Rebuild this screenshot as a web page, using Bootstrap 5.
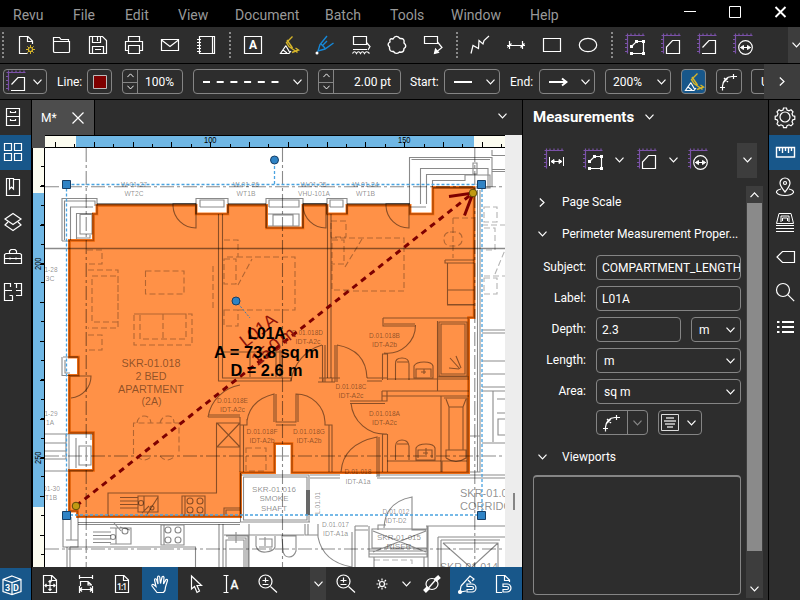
<!DOCTYPE html>
<html lang="en">
<head>
<meta charset="utf-8">
<meta name="viewport" content="width=device-width, initial-scale=1">
<title>Revu</title>
<link href="https://cdn.jsdelivr.net/npm/bootstrap@5.3.0/dist/css/bootstrap.min.css" rel="stylesheet">
<style>
body{width:800px;height:600px;background:#000;color:#fff;font:12px/16px Roboto,"Liberation Sans",sans-serif;overflow:hidden}
svg{display:block;flex:none}
.ic{width:24px;height:24px;fill:none;stroke:#fff;stroke-width:1.2;margin:0 6px}
.chev{width:9px;height:6px;fill:none;stroke:#fff;stroke-width:1.2}
.menubar{height:27px;font-size:14px;line-height:16px;color:#999;padding:4px 0 0 13px}
.menubar span{flex:none;white-space:nowrap;padding-top:3px}
.surface{background:#2d2d2d}
.toolrow{height:36px;margin-bottom:1px}
.grip{width:11px;height:26px;flex:none;background:repeating-linear-gradient(#8a8a8a 0 2px,transparent 2px 4px) 3px 0/2px 100% no-repeat}
.grip-first{width:8px;background-position-x:2px}
.proprow{height:35px;margin-bottom:1px;padding-left:3px}
.ctl{height:25px;border:1px solid #858585;border-radius:4px;flex:none;overflow:hidden;white-space:nowrap}
.spin{width:15px;border-right:1px solid #858585;flex:none}
.spin>span{height:50%;display:flex;align-items:center;justify-content:center}
.spin>span+span{border-top:1px solid #858585}
.spin .chev{width:7px;height:5px}
.blue{background:#18578a}
.raised{background:#3d3d3d}
.rail{width:31px;flex:none}
.rail>span{height:35px;padding-top:5px}
.rail .ic{margin:0 0 0 1px}
.rail-r .ic{margin-left:4px}
.tabstrip{height:35px}
.doctab{width:62px;background:#4d4d4d;border-right:0}
.bottombar{height:33px}
.bottombar>span{height:33px;display:flex;align-items:center;justify-content:center}
.panel{width:245px;flex:none}
.frm{row-gap:6px}
.frm label{width:63px;text-align:right;margin-right:10px;flex:none;line-height:25px}
.sect{height:32px}
.sbar{width:17px;background:#3d3d3d;flex:none}
.thumb{width:15px;height:348px;background:#8a8a8a}
</style>
<script src="https://cdn.jsdelivr.net/npm/bootstrap@5.3.0/dist/js/bootstrap.bundle.min.js"></script>
</head>
<body class="d-flex flex-column">
<svg width="0" height="0" class="position-absolute">
<defs>
<symbol id="dn" viewBox="0 0 9 6"><path d="M.5.7 4.5 4.9 8.5.7"/></symbol>
<symbol id="up" viewBox="0 0 9 6"><path d="M.5 5.1 4.5.9 8.5 5.1"/></symbol>
<symbol id="rt" viewBox="0 0 6 9"><path d="M.8.5 5 4.5.8 8.5"/></symbol>
<symbol id="mruler" viewBox="0 0 24 24"><path d="M2.500 2.500H21.500M4.500.5V20.500" stroke="#7b52a8"/><path d="M8 .5v2M12 .5v2M16 .5v2M20 .5v2M2 6.500h2M2 10.500h2M2 14.500h2M2 18.500h2" stroke="#7b52a8"/></symbol>
<symbol id="new" viewBox="0 0 24 24"><path d="M13.500 20.500H5.500V3.500H14L18.500 8V11M13.500 3.500V8.500H18.500"/><path d="M16.500 12v9M12 16.500h9M13.300 13.300l6.400 6.400M19.700 13.300l-6.400 6.400" stroke="#d6b52a" stroke-width="1"/><circle cx="16.500" cy="16.500" r="2" fill="#2d2d2d" stroke="#d6b52a"/></symbol>
<symbol id="open" viewBox="0 0 24 24"><path d="M3.500 18.500V4.500H9.500L11 6.500H18.500V8.500M3.500 18.500Q3.500 19.500 5 19.500H18.500Q19.500 19.500 19.500 18.500V8.500H3.500"/></symbol>
<symbol id="save" viewBox="0 0 24 24"><path d="M3.500 3.500H16.500L20.500 7.500V20.500H3.500ZM6.500 3.500V9.500H14.500V3.500M11.500 4V8M6.500 20V13.500H17.500V20M9 16.500h6"/></symbol>
<symbol id="print" viewBox="0 0 24 24"><path d="M6.500 8.500V3.500H17.500V8.500M6.500 17.500H3.500V8.500H20.500V17.500H17.500M6.500 12.500H17.500V20.500H6.500Z"/></symbol>
<symbol id="mail" viewBox="0 0 24 24"><path d="M3.500 6.500H20.500V17.500H3.500ZM3.500 7 12 13.500 20.500 7"/></symbol>
<symbol id="book" viewBox="0 0 24 24"><path d="M5.500 3.500H20.500V20.500H5.500ZM18.500 4V20M3 6.500h4M3 9.500h4M3 12.500h4M3 15.500h4M3 18.500h4"/></symbol>
<symbol id="atext" viewBox="0 0 24 24"><path d="M3.500 3.500H20.500V20.500H3.500Z"/><text x="8" y="16" font-size="12" font-weight="700" fill="#fff" stroke="none">A</text></symbol>
<symbol id="hilite" viewBox="0 0 24 24"><path d="M15.500 3.500 9.500 9.500l2.500 4 8.500 6M10 7l5.500 8M15 19.500l6.500-2.500-3-2" stroke="#d6b52a" stroke-width="1.400"/><path d="M9 12.500 3.500 20.500H12L14 18M9 13l3.500 6M6 17l4 3"/></symbol>
<symbol id="pen" viewBox="0 0 24 24"><path d="M14 3 7 11.500 5 18l7-2 8.500-6M8 11l4 4M10 12l4-4" stroke="#1688d8" stroke-width="1.400"/><circle cx="4" cy="20" r="1.500" fill="#fff" stroke="none"/></symbol>
<symbol id="wavebox" viewBox="0 0 24 24"><path d="M4.500 3.500H17.500V11.500H4.500ZM17.500 9.500l3.500 4-2 3.500M4 16.500h14M3.500 20.500q2-3.500 4 0 2-3.500 4 0 2-3.500 4 0 2-3.500 5 0"/></symbol>
<symbol id="cloud" viewBox="0 0 24 24"><path d="M8 6Q11 1 15 5.500 20 5 19 10 22.500 13 19 15.500 19 20 14.500 19 11 22 8.500 18.500 4 19 4.500 14 1.500 11 5 9 4 5 8 6Z" stroke-width="1.400"/></symbol>
<symbol id="callout" viewBox="0 0 24 24"><path d="M3.500 3.500H16.500V10.500H3.500ZM16.500 9l4.500 5.500-5 4"/><path d="m13.500 20.500 1-4.500 3 3.500Z" fill="#fff"/></symbol>
<symbol id="poly" viewBox="0 0 24 24"><path d="m3 20.500 2-8 5.500 3 .5-8 4 3.500 1-3.500 5-4.500"/></symbol>
<symbol id="dim" viewBox="0 0 24 24"><path d="M5.500 8v8M18.500 8v8M3 12.500h18M3.500 14.500l4-4M16.500 14.500l4-4"/></symbol>
<symbol id="rect" viewBox="0 0 24 24"><path d="M3.500 5.500H20.500V18.500H3.500Z"/></symbol>
<symbol id="oval" viewBox="0 0 24 24"><ellipse cx="12" cy="12" rx="8.700" ry="6.700"/></symbol>
<symbol id="mpoly" viewBox="0 0 24 24"><use href="#mruler"/><path d="M8.500 13.500 13.500 8.500H20.500V20.500H8.500"/><path d="M7 12h3v3H7ZM12 7h3v3h-3ZM19 7h3v3h-3ZM19 19h3v3h-3ZM7 19h3v3H7Z" fill="#fff" stroke="none"/></symbol>
<symbol id="marea" viewBox="0 0 24 24"><use href="#mruler"/><path d="M7.500 20.500V14L13.500 7.500H20.500V20.500Z"/></symbol>
<symbol id="mper" viewBox="0 0 24 24"><use href="#mruler"/><path d="M7.500 14.500 14 7.500H20.500V20.500H7"/></symbol>
<symbol id="mdia" viewBox="0 0 24 24"><use href="#mruler"/><circle cx="14.500" cy="14.500" r="6.800"/><path d="M9.500 14.500h10M12.500 12.500l-3 2 3 2ZM16.500 12.500l3 2-3 2Z" fill="#fff" stroke-width="1"/></symbol>
<symbol id="mlen" viewBox="0 0 24 24"><use href="#mruler"/><path d="M7.500 9v9M21.500 9v9M9 13.500h11M12 11.500l-3 2 3 2ZM17 11.500l3 2-3 2Z" fill="#fff" stroke-width="1"/></symbol>
<symbol id="curve" viewBox="0 0 24 24"><path d="M5.500 20.500V16Q6.500 7 15 6.500H20M3 17.500h5M16.500 4v5M7 8l4 4M11 8l-4 4"/></symbol>
<symbol id="cabinet" viewBox="0 0 24 24"><path d="M5.500 3.500H18.500V20.500H5.500ZM5.500 11.500H18.500M9.500 6v1.500h5V6M9.500 14v1.500h5V14"/></symbol>
<symbol id="grid4" viewBox="0 0 24 24"><path d="M3.500 3.500h7v7h-7ZM13.500 3.500h7v7h-7ZM3.500 13.500h7v7h-7ZM13.500 13.500h7v7h-7Z"/></symbol>
<symbol id="bmark" viewBox="0 0 24 24"><path d="M8 3.500H5.500V20.500H18.500V4.500H12.500M8.500 3.500h4V14l-2-2-2 2Z"/></symbol>
<symbol id="layers" viewBox="0 0 24 24"><path d="m12 3.500 8 5.500-8 5.500L4 9ZM7 12l-3 3 8 5.500 8-5.500-3-3"/></symbol>
<symbol id="case" viewBox="0 0 24 24"><path d="M3.500 11V9.500L5 8.500H19l1.500 1V18.500H3.500V11M4 13.500H20M9 12.500v2M15 12.500v2M8.500 8V6L10 4.500h4L15.500 6v2"/></symbol>
<symbol id="plan" viewBox="0 0 24 24"><path d="M9 3.500H3.500V20.500H11.500V15.500M13 3.500h7.500v12h-5.500M9.500 3v4M15.500 3v5M3.500 10.500H11M15 10.500h5.500M8.500 15.500h3"/></symbol>
<symbol id="gear" viewBox="0 0 24 24"><circle cx="12" cy="12" r="5"/><path d="m10 5 .5-2h3l.5 2 2 .8 2-1 2 2-1 2 .8 2 2 .500v3l-2 .500-.8 2 1 2-2 2-2-1-2 .8-.500 2h-3l-.500-2-2-.8-2 1-2-2 1-2-.8-2-2-.500v-3l2-.500.8-2-1-2 2-2 2 1Z"/></symbol>
<symbol id="rule" viewBox="0 0 24 24"><path d="M3.500 7.500H21.500V17H3.500ZM6.500 8v3M9.500 8v5M12.500 8v3M15.500 8v5M18.500 8v3" stroke-width="1.400"/></symbol>
<symbol id="pin" viewBox="0 0 24 24"><path d="M12 17Q7 11 7 8a5 5 0 0 1 10 0q0 3-5 9ZM8 14q-5 1-4.500 3.500 2 3 8.500 3t8.500-3Q21 15 16 14"/><circle cx="12" cy="8" r="1.500"/></symbol>
<symbol id="stack" viewBox="0 0 24 24"><path d="M6 3.500H18L20.500 13.500H3.500ZM8 12V6h8v6M3 15.500h18M3 18.500h18M3 21.500h18M9.500 11V8h5v3" stroke-width="1"/></symbol>
<symbol id="tag" viewBox="0 0 24 24"><path d="M9.500 6.500H21.500V17.500H9.500L4 12Z"/></symbol>
<symbol id="find" viewBox="0 0 24 24"><circle cx="10" cy="10" r="6.500"/><path d="m14.700 14.700 6.500 6.500"/></symbol>
<symbol id="list" viewBox="0 0 24 24"><path d="M9 7h12M9 12h12M9 17h12M4 7h2.500M4 12h2.500M4 17h2.500" stroke-width="2"/></symbol>
<symbol id="cube" viewBox="0 0 24 24"><path d="m12 3 9 3.500v12L12 21.500l-9-3v-12ZM3 6.500l9 3 9-3M12 9.500v12"/><g fill="#fff" stroke="none" font-size="9" font-weight="700"><text x="5" y="17.500">3</text><text x="13" y="17.500">D</text></g></symbol>
<symbol id="fitp" viewBox="0 0 24 24"><path d="M5.500 3.500H14L18.500 8V20.500H5.500ZM13.500 3.500V8.500H18M7 13.500h10M12 8.500v10M8.500 12 7 13.500 8.500 15M15.500 12l1.500 1.500-1.500 1.500M10.500 10 12 8.500l1.500 1.500M10.500 17l1.500 1.500 1.500-1.500"/></symbol>
<symbol id="fitw" viewBox="0 0 24 24"><path d="M5.500 3v4M18.500 3v4M5.500 5.500h13M6.500 14V9.500H14L17.500 13M14 9.500V13h4M5.500 14v7M18.500 14v7M6 17.500h12M8 15.500l-2 2 2 2M16 15.500l2 2-2 2"/></symbol>
<symbol id="actual" viewBox="0 0 24 24"><path d="M5.500 3.500H14L18.500 8V20.500H5.500ZM13.500 3.500V8.500H18"/><text x="7" y="17.500" font-size="8.500" font-weight="500" fill="#fff" stroke="none" textLength="10">1:1</text></symbol>
<symbol id="hand" viewBox="0 0 24 24"><path d="M9 20.500 4 14q-.5-2 1.500-1.500L8 14.500 6.500 8q.3-2 2-.8L10 12 9.500 5q1-2 2.200 0L12.500 11.500 14 5q1.500-1.500 2 .5L15.500 12l2.500-4.500q1.800-.6 1.500 1L17.500 15q0 4-2 5.500Z"/></symbol>
<symbol id="arrow" viewBox="0 0 24 24"><path d="m7.500 4 10 9.500H13l2.500 5.500-2.500 1.500-2.500-6L7.500 17Z"/></symbol>
<symbol id="tsel" viewBox="0 0 24 24"><path d="M3.500 3.500h5M3.500 20.500h5M6.500 3.500v17"/><text x="10.500" y="16.500" font-size="12" fill="#fff" stroke="#fff" stroke-width=".4">A</text></symbol>
<symbol id="zoomr" viewBox="0 0 24 24"><circle cx="9.500" cy="9.500" r="6.500"/><path d="m14.500 14.500 6.500 6M6.500 8.500h6M9.500 5.500v5M6.500 12.500h6"/></symbol>
<symbol id="sun" viewBox="0 0 24 24"><circle cx="12" cy="12" r="2.500"/><path d="M12 6.500v2M12 15.500v2M6.500 12h2M15.500 12h2M8 8l1.500 1.500M14.500 14.500 16 16M16 8l-1.500 1.500M9.500 14.500 8 16"/></symbol>
<symbol id="thick" viewBox="0 0 24 24"><ellipse cx="12" cy="12" rx="6" ry="5.500"/><path d="M4.500 19.500 8.500 15.500M15 8.500 19.500 4.500" stroke-width="4"/><path d="m8.500 16 7-8" stroke-width="1.300"/></symbol>
<symbol id="snapm" viewBox="0 0 24 24"><path d="M5 14 14 4l4 3-2 2M5 14l-1 6 6-1M12 8l3 3"/><circle cx="4" cy="20" r="1.500" fill="#fff"/><path d="M11 12h5a4 4 0 0 1 0 8h-5v-2.500h5a1.500 1.500 0 0 0 0-3h-5Z" fill="#18578a"/></symbol>
<symbol id="snapd" viewBox="0 0 24 24"><path d="M10 20.500H4.500V3.500H13L17.500 8v2M12.500 3.500V8.500H17"/><path d="M11 12h4a4 4 0 0 1 0 8h-4v-2.500h4a1.500 1.500 0 0 0 0-3h-4Z" fill="#18578a"/></symbol>
</defs></svg>

<header class="menubar d-flex position-relative">
<span style="width:60px">Revu</span><span style="width:52px">File</span><span style="width:53px">Edit</span><span style="width:57px">View</span><span style="width:90px">Document</span><span style="width:65px">Batch</span><span style="width:61px">Tools</span><span style="width:79px">Window</span><span>Help</span>
<svg width="108" height="16" viewBox="-2 0 108 16" class="ms-auto me-2 mt-0" fill="none" stroke="#fff"><path d="M-2 7.500h12M43.500 2.500h11v11h-11Z"/><path d="m89.500 3 10 10M99.500 3l-10 10" stroke-width="1.900"/></svg>
</header>

<div class="toolrow surface d-flex align-items-center">
<i class="grip grip-first"></i>
<svg class="ic"><use href="#new"/></svg><svg class="ic"><use href="#open"/></svg><svg class="ic"><use href="#save"/></svg><svg class="ic"><use href="#print"/></svg><svg class="ic"><use href="#mail"/></svg><svg class="ic"><use href="#book"/></svg>
<i class="grip" style="background-position-x:5px"></i>
<svg class="ic"><use href="#atext"/></svg><svg class="ic"><use href="#hilite"/></svg><svg class="ic"><use href="#pen"/></svg><svg class="ic"><use href="#wavebox"/></svg><svg class="ic"><use href="#cloud"/></svg><svg class="ic"><use href="#callout"/></svg>
<i class="grip" style="background-position-x:5px"></i>
<svg class="ic"><use href="#poly"/></svg><svg class="ic"><use href="#dim"/></svg><svg class="ic"><use href="#rect"/></svg><svg class="ic"><use href="#oval"/></svg>
<i class="grip" style="background-position-x:5px"></i>
<svg class="ic"><use href="#mpoly"/></svg><svg class="ic"><use href="#marea"/></svg><svg class="ic"><use href="#mper"/></svg><svg class="ic"><use href="#mdia"/></svg>
<span class="raised ms-auto h-100 d-flex align-items-center overflow-hidden" style="width:12px;padding-left:4px"><svg class="chev"><use href="#dn"/></svg></span>
</div>

<div class="proprow surface d-flex align-items-center">
<span class="ctl d-flex align-items-center" style="width:44px"><svg class="ic" style="margin:0 5px 0 0"><use href="#mper"/></svg><svg class="chev"><use href="#dn"/></svg></span>
<span style="width:40px;padding-left:10px">Line:</span>
<span class="ctl d-flex align-items-center justify-content-center" style="width:25px"><svg width="14" height="14"><path d="M.5.5h13v13H.5Z" fill="#7e0000" stroke="#bbb"/></svg></span>
<span class="ctl d-flex" style="width:61px;margin-left:10px"><span class="spin"><span><svg class="chev"><use href="#up"/></svg></span><span><svg class="chev"><use href="#dn"/></svg></span></span><span style="line-height:24px;padding-left:7px">100%</span></span>
<span class="ctl d-flex align-items-center justify-content-between" style="width:115px;margin-left:10px;padding:0 5px 0 9px"><svg width="76" height="2"><path d="M0 1H76" stroke="#fff" stroke-width="2" stroke-dasharray="7 6.700"/></svg><svg class="chev"><use href="#dn"/></svg></span>
<span class="ctl d-flex" style="width:83px;margin-left:10px"><span class="spin"><span><svg class="chev"><use href="#up"/></svg></span><span><svg class="chev"><use href="#dn"/></svg></span></span><span style="line-height:24px;padding-left:20px">2.00 pt</span></span>
<span style="width:43px;padding-left:9px">Start:</span>
<span class="ctl d-flex align-items-center justify-content-between" style="width:56px;padding:0 4px 0 9px"><svg width="18" height="2"><path d="M0 1H18" stroke="#fff" stroke-width="2"/></svg><svg class="chev"><use href="#dn"/></svg></span>
<span style="width:39px;padding-left:10px">End:</span>
<span class="ctl d-flex align-items-center justify-content-between" style="width:56px;padding:0 4px 0 9px"><svg width="19" height="10" fill="none" stroke="#fff" stroke-width="2"><path d="M0 5H17M13 1.500l4.500 3.500-4.500 3.500"/></svg><svg class="chev"><use href="#dn"/></svg></span>
<span class="ctl d-flex align-items-center justify-content-between" style="width:66px;margin-left:10px;padding:0 4px 0 7px">200%<svg class="chev"><use href="#dn"/></svg></span>
<span class="ctl blue d-flex align-items-center justify-content-center" style="width:25px;margin-left:10px"><svg class="ic m-0"><use href="#hilite"/></svg></span>
<span class="ctl d-flex align-items-center justify-content-center" style="width:26px;margin-left:10px"><svg class="ic m-0"><use href="#curve"/></svg></span>
<span class="ctl border-end-0 rounded-end-0" style="width:13px;margin-left:9px;line-height:24px;padding-left:9px">U</span>
<span class="raised flex-fill h-100 d-flex align-items-center justify-content-center"><svg class="chev" style="width:6px;height:9px"><use href="#rt"/></svg></span>
</div>

<main class="d-flex flex-fill" style="min-height:0;gap:1px">
<nav class="rail surface d-flex flex-column">
<span><svg class="ic"><use href="#cabinet"/></svg></span><span class="blue"><svg class="ic"><use href="#grid4"/></svg></span><span><svg class="ic"><use href="#bmark"/></svg></span><span><svg class="ic"><use href="#layers"/></svg></span><span><svg class="ic"><use href="#case"/></svg></span><span><svg class="ic"><use href="#plan"/></svg></span>
<span class="blue mt-auto" style="height:32px"><svg class="ic" style="margin-left:0"><use href="#cube"/></svg></span>
</nav>

<section class="d-flex flex-column" style="width:490px">
<div class="tabstrip d-flex" style="gap:1px"><div class="doctab d-flex align-items-center" style="padding-left:9px;gap:15px"><span>M*</span><svg width="12" height="12" fill="none" stroke="#fff" stroke-width="1.200"><path d="m.5.5 11 11M11.500.5l-11 11"/></svg></div><div class="surface flex-fill d-flex align-items-center justify-content-end" style="padding-right:15px;padding-bottom:3px"><svg class="chev"><use href="#dn"/></svg></div></div>
<svg width="490" height="432" viewBox="32 135 490 432" fill="none" font-family="Liberation Sans, Arial, sans-serif">
<defs><clipPath id="page"><path d="M45 148H505V567H45Z"/></clipPath></defs>
<path d="M32 135H522V567H32Z" fill="#000"/><path d="M45 148H505V567H45Z" fill="#fff"/>
<path d="M505 135H522V567H505Z" fill="#ededed"/><path d="M32 135H45V148H32Z" fill="#4d4d4d"/>
<path d="M45 136H505V147H45ZM33 148H44V567H33Z" fill="#fcfcf0"/>
<path d="M76 136H474V147H76ZM33 193H44V507H33Z" fill="#70b7e4"/>
<g stroke="#000" shape-rendering="crispEdges"><path d="M55 145.500H505" stroke-width="3" stroke-dasharray="1 18.400"/><path d="M55 144.500H505" stroke-width="5" stroke-dasharray="1 37.800"/><path d="M42.500 166V567" stroke-width="3" stroke-dasharray="1 18.400"/><path d="M42 186V567" stroke-width="4" stroke-dasharray="1 37.800"/></g>
<g font-size="8.500" fill="#000" stroke="none"><text x="204" y="143" textLength="12.500" lengthAdjust="spacingAndGlyphs">100</text><text x="398" y="143" textLength="12.500" lengthAdjust="spacingAndGlyphs">150</text><text transform="translate(41 270) rotate(-90)" textLength="12.500" lengthAdjust="spacingAndGlyphs">200</text><text transform="translate(41 464) rotate(-90)" textLength="12.500" lengthAdjust="spacingAndGlyphs">250</text></g>
<path d="M514 493V510" stroke="#858585" stroke-width="2"/>
<g clip-path="url(#page)">
<!-- compartment fill -->
<path d="M97 205.500H196V214H228V205.500H266.500V228H303V205.500H327V214H347V205.500H410V214H433V187.500H474V317.500H468.500V472.500H292V443.500H274.500V472.500H240.500V516.500H77.500V511H69.500V470.500H93.500V432.500H69.500V375.500H78.500V357H69.500V240.500H93.500V214H97Z" fill="#ff9147" stroke="#ff7a1c" stroke-width="3"/>
<path d="M97 205.500H196V214H228V205.500H266.500V228H303V205.500H327V214H347V205.500H410V214H433V187.500H474V317.500H468.500V472.500H292V443.500H274.500V472.500H240.500V516.500H77.500V511H69.500V470.500H93.500V432.500H69.500V375.500H78.500V357H69.500V240.500H93.500V214H97Z" stroke="#b64a04" stroke-width="1.700"/>
<!-- building linework -->
<g stroke="#000" stroke-opacity=".46" stroke-width="1.100">
<path d="M45 248.500H505" stroke-width="1.500"/>
<path d="M86.200 148V567M282.500 148V567M474.800 148V567M45 186.700H505M45 456H505M45 549H505" stroke-dasharray="14 3 3 3"/>
<path d="M97 204H196M228 204H266M303 204H327M347 204H410" stroke-width="2"/>
<path d="M62 241V198.500H97V206M64.500 240V201H95V206M70.500 240V207H93M76.500 239V213.500H93M80 214.500H92V234H80ZM62 241H70M77 238H90V235"/>
<path d="M196 214V198.500H228V213M200 207V200H224V207H200M266 228V198.500H303V228M269 207V200H299V207H269M268 214H299V226H268M273 215H293V226H273ZM327 214V198.500H347V214M330 207V200H343V207H330"/>
<path d="M409.500 204V157.500H492V187M411.500 159.500H490M420.500 204V168.500H488V188M426.500 204V174.500H476M432.500 187V180.500H465V175H490V188H433M473 163V174H477V163ZM410 207H426M492 156V150M492 155.500H505M492 169.500H505M492 171.500H505"/>
<path d="M477.500 190V472M480 190V472M470 472H480V436H470M482 330H505M482 333H505M482 361H505M482 374H505M482 387H505M482 391H505M493 391V442M497 399H505M497 413H505M498 443H505M505 419H498V435H505M482 443H505"/>
<path d="M173 206V203.500H196V228A23 23 0 0 1 173 206M303 206V203.500H326V228A23 23 0 0 1 303 206M386 206V203.500H409V228A23 23 0 0 1 386 206M218.500 214V381H240M222.500 214V378H240M327.500 214V378M331 214V378M222 378H291V381H218M222 352H282V378M280 350V377M276 350V377M250 352V377"/>
<path d="M445 260H474M445 260V263H474M447.500 263V305H474M447.500 290H474M447.500 304.500H474M383 318H468M383 318V326H416M384 324H415M415.500 325A28 28 0 0 1 384 353M382.500 354V380M387.500 354V380M382 354H388M367 378H387M367 381H382M387 379H469M437.500 321V391M439 322H467V376H439ZM441 324H465V374H441ZM438 377H469M382 391H469M382 396H469M387 391V401H382V391M350 401H387M350 403.500H385M351 403A34 34 0 0 0 387 434M382.500 434V472M387.500 434V472M441 396V472V472M444 398H467V472M446 399 449 407H463L466 399M449 407V450H463V407M446 458V450H466V458Q456 465 446 458"/>
<path d="M322.500 345V382M325 345V382M322 345A44 44 0 0 0 291 381M335 345V382M337 345V382M337 345Q366 350 367 378M318 382H335M319 378H340M323 378V382H332V378M208 417A39 39 0 0 1 240 385M208 417H240M208 415H240M240 417V425H247V419M240 425V472M243.500 425V472M247 421Q250 400 274 394V422M276 394V422H296V394A29 29 0 0 1 325 422V425H332V472M298 394V422M276 425H296M329 425V472M341 472Q343 444 377 437V477M379 437V477M216.500 423H240V447H216.500ZM217 423 240 447M240 423 217 447M216.500 447V493H108V516M224 515V508H240M226 515V510H240"/>
<path d="M395.500 380V364Q395 358 402 358T409 364V380M397 362H408M414 378V366Q416 362 424 362T433 366V378ZM416 378V369H431V377M424 369V374M421 372H426M395.500 460V446Q396 440 402 440T409 446V460M397 444H408M416 460V448Q418 444 426 444T435 448V460ZM418 458V450H432V458M426 448V455M423 453H428M387 461H441M442 472V461H467M450 358 460 369M456 356 461 368M449 368 459 369"/>
<path d="M120 497.500H138M120 501H138M120 504.500H138M120 508H138M138 496H158V512H138ZM144 496V512M142 513 149 506M146 516 158 497M182 496H205V515H182ZM185 496V515"/><circle cx="141" cy="503" r="2.500"/><circle cx="152" cy="508" r="2"/>
<circle cx="190" cy="501" r="3"/><circle cx="200" cy="501" r="3"/><circle cx="190" cy="510" r="3"/><circle cx="200" cy="510" r="3"/>
<path d="M78 522.500H240M78 524.500H240M240.500 473V522H310M243.500 477H307V520H243.500ZM240 475H309V522M93 532H111M93 535.500H111M93 539H111M93 542.500H111M110 528H131V544H110M116 528V544M114 523 121 531M120 527 130 530M161 525H184V545H161ZM164 525V545M70 547H195.500V567M67 547V567M70 547V567"/><circle cx="113" cy="537" r="2.500"/><circle cx="125" cy="531" r="3"/><circle cx="168" cy="530" r="3"/><circle cx="178" cy="530" r="3"/><circle cx="168" cy="540" r="3"/><circle cx="178" cy="540" r="3"/>
<path d="M219 524V567M223 524V567M226 536H248V567M228 538H246V567M224 535H304M249 524V567M226 567V540H244V567M236 532V543M256 536V546Q258 553 266 552T275 547V536M259 539H272V547H259M265 537V546M282 536H296V551Q294 557 289 557T283 551ZM63 513V547H78V517M66 540H78M71 517V540M305 524V535H318V524M308 524V535M355 526H368M355 530H368M355 526V567M352 532V567M318 532V537Q323 562 352 567M310 475H340M310 478H340M377 475H505M377 478H505M384 528Q385 502 412 497V530H426M386 525H378V530M369 526V557H427V526M372 529H427V548H372ZM369 551H427M369 554H427M424 557V567M374 557V567M426 526H505M428 526V567M438 537H505M438 537V567M441 540H500M441 540V567M443 543H498V567M443 543 470 567M498 543 472 567M373 531 426 552M426 531 373 552"/>
<path d="M307 490V515M309 490V515" stroke-width="2"/>
<path d="M45 434H93M45 443H66M45 451H66M45 459H66V434M45 471H93M69 434V470M77 434H91V440M79 446H91V465H79ZM76 438V468M63 357H78M62 357V375.500H70M65 360V373H70M70 376H91A22 22 0 0 1 71 398"/>
<g stroke-opacity=".3" stroke-dasharray="6 3"><path d="M88 270H118V328H88M92 276H118V322H92ZM87 250H102V264H87M88 335H102V350H88M145.500 271H184V294H145.500ZM134 314H192V345H134ZM140 314H186V339H140ZM163 314V339M133.500 454V423H179V454M137 423Q138 416 144 416T151 423M160 423Q162 416 168 416T174 423M137 456Q144 464 152 456M160 456Q167 464 175 456M213 266V308M224 240H238V257H224M224 259H236V284H224ZM237 257H295V310H238M238 285 252 259M224 310H238V326H224ZM331 221H346V237H331ZM331 238H404V291H344M332 240H344V264H332ZM345 267 362 239M332 265V290H352M453 218V258M453 218H474M484 207H497V222H484ZM482 225H505M484 228H495V250H484M495 274 505 250M484 276H505M484 278H497V294H484ZM246 448H266V471H246ZM374 560H412V567"/><rect x="444" y="232" width="18" height="14" rx="6"/></g>
</g>
<!-- room and door tags -->
<g fill="#000" fill-opacity=".46" font-size="8" text-anchor="middle">
<text x="134" y="186.500" textLength="26" lengthAdjust="spacingAndGlyphs">W-01-27</text><text x="134" y="196" textLength="19" lengthAdjust="spacingAndGlyphs">WT2C</text><text x="246" y="186.500" textLength="26" lengthAdjust="spacingAndGlyphs">W-01-26</text><text x="246" y="196" textLength="19" lengthAdjust="spacingAndGlyphs">WT1B</text><text x="313.500" y="186.500" textLength="26" lengthAdjust="spacingAndGlyphs">W-01-25</text><text x="314" y="196" textLength="32" lengthAdjust="spacingAndGlyphs">VHU-101A</text><text x="365.500" y="186.500" textLength="26" lengthAdjust="spacingAndGlyphs">W-01-24</text><text x="365.500" y="196" textLength="19" lengthAdjust="spacingAndGlyphs">WT1B</text>
<text x="51" y="272" textLength="13" lengthAdjust="spacingAndGlyphs">1-28</text><text x="50" y="281" textLength="9" lengthAdjust="spacingAndGlyphs">3C</text><text x="51" y="416" textLength="13" lengthAdjust="spacingAndGlyphs">1-29</text><text x="50" y="425" textLength="8" lengthAdjust="spacingAndGlyphs">1A</text><text x="51.500" y="491" textLength="17" lengthAdjust="spacingAndGlyphs">01-30</text><text x="51" y="500" textLength="12" lengthAdjust="spacingAndGlyphs">T1B</text>
<text x="232.500" y="403" textLength="31" lengthAdjust="spacingAndGlyphs">D.01.018E</text><text x="232.500" y="412" textLength="25" lengthAdjust="spacingAndGlyphs">IDT-A2c</text><text x="307.500" y="335" textLength="31" lengthAdjust="spacingAndGlyphs">D.01.018D</text><text x="308" y="344" textLength="25" lengthAdjust="spacingAndGlyphs">IDT-A2c</text><text x="384.500" y="338" textLength="31" lengthAdjust="spacingAndGlyphs">D.01.018B</text><text x="384.500" y="347" textLength="25" lengthAdjust="spacingAndGlyphs">IDT-A2b</text><text x="351" y="389" textLength="31" lengthAdjust="spacingAndGlyphs">D.01.018C</text><text x="351" y="398" textLength="25" lengthAdjust="spacingAndGlyphs">IDT-A2c</text><text x="384.500" y="416" textLength="31" lengthAdjust="spacingAndGlyphs">D.01.018A</text><text x="384.500" y="425" textLength="25" lengthAdjust="spacingAndGlyphs">IDT-A2c</text><text x="262" y="434" textLength="31" lengthAdjust="spacingAndGlyphs">D.01.018F</text><text x="262" y="443" textLength="25" lengthAdjust="spacingAndGlyphs">IDT-A2b</text><text x="309" y="434" textLength="32" lengthAdjust="spacingAndGlyphs">D.01.018G</text><text x="309" y="443" textLength="25" lengthAdjust="spacingAndGlyphs">IDT-A2b</text><text x="358" y="474" textLength="27" lengthAdjust="spacingAndGlyphs">D.01.018</text><text x="358" y="484" textLength="25" lengthAdjust="spacingAndGlyphs">IDT-A1a</text><text x="335.500" y="527" textLength="27" lengthAdjust="spacingAndGlyphs">D.01.017</text><text x="335.500" y="536" textLength="25" lengthAdjust="spacingAndGlyphs">IDT-A1a</text><text x="396" y="514" textLength="27" lengthAdjust="spacingAndGlyphs">D.01.012</text><text x="396" y="523" textLength="21" lengthAdjust="spacingAndGlyphs">IDT-D2</text>
<text x="274" y="492" textLength="44" lengthAdjust="spacingAndGlyphs">SKR-01.016</text><text x="274" y="501" textLength="29" lengthAdjust="spacingAndGlyphs">SMOKE</text><text x="274" y="510.500" textLength="26" lengthAdjust="spacingAndGlyphs">SHAFT</text><text x="399" y="540" textLength="44" lengthAdjust="spacingAndGlyphs">SKR-01-015</text><text x="399" y="549" textLength="25" lengthAdjust="spacingAndGlyphs">RISER</text><text transform="translate(320 503) rotate(-90)" textLength="22" lengthAdjust="spacingAndGlyphs">L.01.01</text>
<g font-size="11"><text x="151" y="367" textLength="59" lengthAdjust="spacingAndGlyphs">SKR-01.018</text><text x="151" y="380" textLength="31" lengthAdjust="spacingAndGlyphs">2 BED</text><text x="151" y="393" textLength="66" lengthAdjust="spacingAndGlyphs">APARTMENT</text><text x="151.500" y="405" textLength="20" lengthAdjust="spacingAndGlyphs">(2A)</text></g>
<g font-size="11" text-anchor="start"><text x="460" y="497">SKR-01.017</text><text x="460" y="510">CORRIDOR</text><text x="440" y="570.500" textLength="58" lengthAdjust="spacingAndGlyphs">SKR-01.014</text></g>
</g>
<!-- measurement markup -->
<path d="M76 506 473 193" stroke="#7e0000" stroke-width="3" stroke-dasharray="6 5"/>
<path d="M449 196.500 473 193 464.500 215.500" stroke="#7e0000" stroke-width="3"/>
<g fill="#8f1208" font-size="18" text-anchor="middle"><text transform="translate(262 335) rotate(-38)">L01A</text><text transform="translate(277 351) rotate(-38)" textLength="50">15.0 m</text></g>
<g fill="#000" font-weight="700" font-size="16" text-anchor="middle"><text x="266.500" y="339" textLength="38" lengthAdjust="spacingAndGlyphs">L01A</text><text x="266.500" y="357.500" textLength="105" lengthAdjust="spacingAndGlyphs">A = 73.8 sq m</text><text x="266.500" y="376" textLength="72" lengthAdjust="spacingAndGlyphs">D = 2.6 m</text></g>
<path d="M66.500 184.500H482V515H66.500ZM274.500 184V160" stroke="#4aa3e0" stroke-width="1.300" stroke-dasharray="3 2"/><path d="M236 301 250 318" stroke="#3d7fb0" stroke-dasharray="2 1.500"/>
<g fill="#2f83c5" stroke="#173f66" stroke-width="1"><path d="M62.500 180.500h8v8h-8ZM477.500 180.500h8v8h-8ZM62.500 511.500h8v8h-8ZM477.500 511.500h8v8h-8Z"/><circle cx="274.500" cy="160" r="4"/><circle cx="236" cy="301" r="4"/></g>
<g fill="#c09a12" stroke="#5b4a08"><circle cx="473" cy="193" r="3.800"/><circle cx="76" cy="506" r="3.800"/></g>
</g></svg>
<div class="bottombar surface d-flex">
<span><svg class="ic"><use href="#fitp"/></svg></span><span><svg class="ic"><use href="#fitw"/></svg></span><span><svg class="ic"><use href="#actual"/></svg></span><span class="blue" style="margin-left:2px;width:36px"><svg class="ic"><use href="#hand"/></svg></span><span><svg class="ic"><use href="#arrow"/></svg></span><span><svg class="ic"><use href="#tsel"/></svg></span><span><svg class="ic"><use href="#zoomr"/></svg></span>
<span class="raised" style="width:16px;margin-left:24px"><svg class="chev"><use href="#dn"/></svg></span>
<span style="margin-left:2px"><svg class="ic"><use href="#zoomr"/></svg></span><span style="width:35px"><svg class="ic"><use href="#sun"/></svg></span><span style="width:15px"><svg class="chev"><use href="#dn"/></svg></span><span><svg class="ic"><use href="#thick"/></svg></span>
<span class="blue flex-fill"><svg class="ic"><use href="#snapm"/></svg></span><span class="blue flex-fill"><svg class="ic"><use href="#snapd"/></svg></span>
</div>
</section>

<aside class="panel surface d-flex flex-column">
<div class="d-flex align-items-center fw-bold" style="height:34px;padding-left:10px;gap:11px;font-size:15px">Measurements<svg class="chev"><use href="#dn"/></svg></div>
<div class="d-flex align-items-center" style="height:52px;padding:0 11px 0 19px"><svg class="ic m-0"><use href="#mlen"/></svg><svg class="ic" style="margin:0 10px 0 15px"><use href="#mpoly"/></svg><svg class="chev"><use href="#dn"/></svg><svg class="ic" style="margin:0 10px 0 11px"><use href="#marea"/></svg><svg class="chev"><use href="#dn"/></svg><svg class="ic" style="margin:0 0 0 8px"><use href="#mdia"/></svg><span class="raised ms-auto d-flex align-items-center justify-content-center" style="width:20px;height:35px"><svg class="chev"><use href="#dn"/></svg></span></div>
<div class="d-flex flex-fill" style="padding:0 5px 2px 10px;gap:5px;min-height:0">
<div class="d-flex flex-column" style="width:208px">
<div class="sect d-flex align-items-center"><svg class="chev" style="width:6px;height:9px;margin:0 17px 0 6px"><use href="#rt"/></svg>Page Scale</div>
<div class="sect d-flex align-items-center text-nowrap"><svg class="chev" style="margin:0 15px 0 5px"><use href="#dn"/></svg>Perimeter Measurement Proper...</div>
<div class="frm d-flex flex-column" style="margin-top:5px;margin-left:-10px">
<div class="d-flex"><label>Subject:</label><span class="ctl" style="line-height:24px;padding-left:5px;width:145px">COMPARTMENT_LENGTH</span></div>
<div class="d-flex"><label>Label:</label><span class="ctl" style="width:145px;line-height:24px;padding-left:5px">L01A</span></div>
<div class="d-flex"><label>Depth:</label><span class="ctl" style="width:85px;line-height:24px;padding-left:5px">2.3</span><span class="ctl d-flex align-items-center justify-content-between" style="width:50px;margin-left:10px;padding:0 5px 0 7px">m<svg class="chev"><use href="#dn"/></svg></span></div>
<div class="d-flex"><label>Length:</label><span class="ctl d-flex align-items-center justify-content-between" style="width:145px;padding:0 5px 0 7px">m<svg class="chev"><use href="#dn"/></svg></span></div>
<div class="d-flex"><label>Area:</label><span class="ctl d-flex align-items-center justify-content-between" style="width:145px;padding:0 5px 0 7px">sq m<svg class="chev"><use href="#dn"/></svg></span></div>
<div class="d-flex" style="padding-left:73px;gap:10px"><span class="ctl d-flex align-items-center" style="width:52px"><span class="d-flex justify-content-center h-100" style="width:31px;border-right:1px solid #858585"><svg class="ic m-0"><use href="#curve"/></svg></span><svg class="chev m-auto" style="stroke:#888"><use href="#dn"/></svg></span><span class="ctl d-flex align-items-center justify-content-between" style="width:44px;padding:0 5px 0 2px"><svg width="18" height="17" fill="none" stroke="#ddd"><path d="M.5.5h17v16H.5Z"/><path d="M5 4h8M3 7h12M4 10h10M6 13h6" stroke-width="2" stroke="#aaa"/></svg><svg class="chev"><use href="#dn"/></svg></span></div>
</div>
<div class="sect d-flex align-items-center" style="margin-top:6px"><svg class="chev" style="margin:0 15px 0 5px"><use href="#dn"/></svg>Viewports</div>
<div class="ctl" style="height:120px;margin-top:2px;border-top-width:2px"></div>
</div>
<div class="sbar d-flex flex-column align-items-center justify-content-between"><svg class="chev" style="margin-top:6px"><use href="#up"/></svg><div class="thumb" style="margin-top:5px"></div><svg class="chev mt-auto" style="margin-bottom:6px"><use href="#dn"/></svg></div>
</div>
</aside>

<nav class="rail rail-r surface d-flex flex-column flex-fill">
<span><svg class="ic"><use href="#gear"/></svg></span><span class="blue"><svg class="ic"><use href="#rule"/></svg></span><span><svg class="ic"><use href="#pin"/></svg></span><span><svg class="ic"><use href="#stack"/></svg></span><span><svg class="ic"><use href="#tag"/></svg></span><span><svg class="ic"><use href="#find"/></svg></span><span><svg class="ic"><use href="#list"/></svg></span>
</nav>
</main>
</body>
</html>
